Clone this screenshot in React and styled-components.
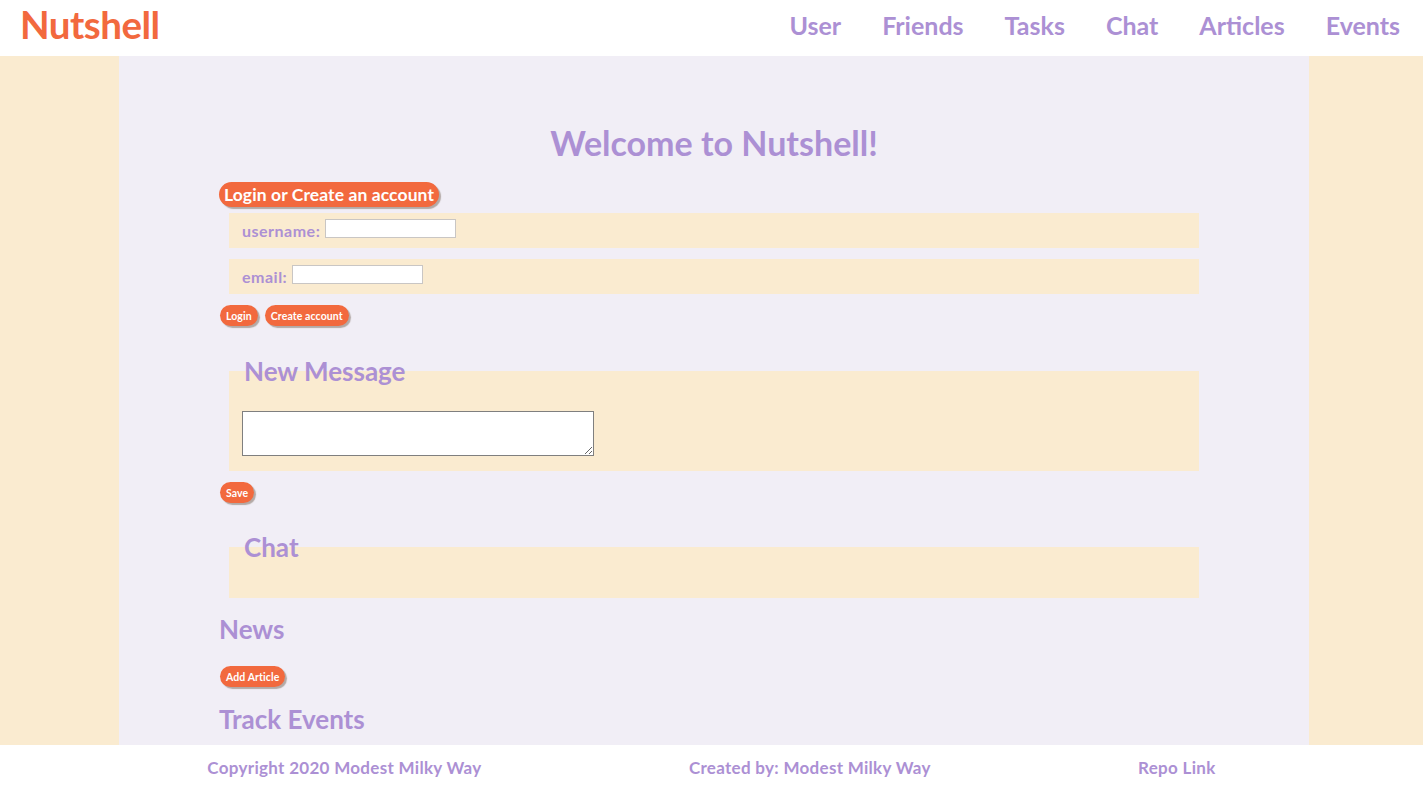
import React from 'react'
import styled, {createGlobalStyle} from 'styled-components'

const purple = '#ac90d4'
const orange = '#f2693e'
const cream = '#faebd0'
const lavender = '#f1eef6'

const GlobalStl = createGlobalStyle`
  html, body {
    margin: 0;
    padding: 0;
    background: ${cream};
    font-family: Lato, "Open Sans", sans-serif;
  }
`

const PageStl = styled.div`
  display: flex;
  flex-direction: column;
  min-height: 100vh;
`

const HeaderStl = styled.header`
  display: flex;
  align-items: center;
  justify-content: space-between;
  height: 56px;
  padding: 0 23px 6px 20px;
  background: #fff;
  box-sizing: border-box;
`

const LogoStl = styled.h1`
  margin: 0 0 2px;
  font-size: 38.5px;
  font-weight: 700;
  color: ${orange};
  letter-spacing: -0.5px;
`

const NavStl = styled.nav`
  display: flex;
  gap: 41px;
`

const NavLinkStl = styled.a`
  font-size: 25px;
  font-weight: 700;
  color: ${purple};
  text-decoration: none;
`

const MainStl = styled.main`
  flex: 1 1 auto;
  display: flex;
  padding-left: 119px;
`

const ColumnStl = styled.div`
  width: 1190px;
  background: ${lavender};
  padding: 66px 100px 11px 100px;
  box-sizing: border-box;
`

const ContentStl = styled.div`
  margin-right: 10px;
`

const TitleStl = styled.h2`
  margin: 0 0 18px;
  text-align: center;
  font-size: 34px;
  line-height: 42px;
  font-weight: 700;
  color: ${purple};
`

const ButtonStl = styled.button`
  display: block;
  border: none;
  border-radius: 14px;
  background: ${orange};
  color: #fff;
  font-family: inherit;
  font-weight: 700;
  font-size: ${({big}) => big ? '17.5px' : '10.5px'};
  letter-spacing: 0.1px;
  height: ${({big}) => big ? '25px' : '21px'};
  padding: ${({big}) => big ? '0 5px' : '0 6px'};
  box-shadow: 2px 2px 1px #b3a9a6;
  cursor: pointer;
  margin: ${({m}) => m || '0'};
`

const ButtonRowStl = styled.div`
  display: flex;
  gap: 7px;
  margin: 11px 0 0 1px;
`

const FieldRowStl = styled.div`
  display: flex;
  align-items: center;
  height: 35px;
  margin: ${({first}) => first ? '6px 0 0 10px' : '11px 0 0 10px'};
  padding-left: 13px;
  background: ${cream};
`

const LabelStl = styled.label`
  font-size: 16px;
  font-weight: 700;
  letter-spacing: 0.5px;
  color: ${purple};
  margin-right: 5px;
`

const InputStl = styled.input`
  width: 131px;
  height: 19px;
  box-sizing: border-box;
  border: 1px solid #c9c6c4;
  background: #fff;
  margin-top: -4px;
`

const FieldsetStl = styled.fieldset`
  margin: ${({m}) => m};
  border: none;
  background: ${cream};
  padding: 0 13px;
  min-height: ${({h}) => h};
  box-sizing: border-box;
`

const LegendStl = styled.legend`
  padding: 0 2px;
  font-size: 26px;
  line-height: 30px;
  font-weight: 700;
  color: ${purple};
`

const TextareaStl = styled.textarea`
  display: block;
  width: 352px;
  height: 45px;
  box-sizing: border-box;
  border: 1px solid #7f7f7f;
  margin: 25px 0 14px;
  background: #fff;
`

const HeadingStl = styled.h3`
  margin: ${({m}) => m};
  font-size: 26px;
  line-height: 30px;
  font-weight: 700;
  color: ${purple};
`

const FooterStl = styled.footer`
  display: flex;
  align-items: center;
  justify-content: space-evenly;
  height: 45px;
  background: #fff;
`

const FooterTextStl = styled.span`
  font-size: 17px;
  font-weight: 700;
  letter-spacing: 0.3px;
  color: ${purple};
`

const navItems = ['User', 'Friends', 'Tasks', 'Chat', 'Articles', 'Events']

export default function App() {
  return (
    <>
      <GlobalStl />
      <PageStl>
        <HeaderStl>
          <LogoStl>Nutshell</LogoStl>
          <NavStl>
            {navItems.map(item => <NavLinkStl key={item} href="#">{item}</NavLinkStl>)}
          </NavStl>
        </HeaderStl>

        <MainStl>
          <ColumnStl>
            <TitleStl>Welcome to Nutshell!</TitleStl>

            <ContentStl>
              <ButtonStl big>Login or Create an account</ButtonStl>

              <FieldRowStl first>
                <LabelStl>username:</LabelStl>
                <InputStl />
              </FieldRowStl>
              <FieldRowStl>
                <LabelStl>email:</LabelStl>
                <InputStl />
              </FieldRowStl>

              <ButtonRowStl>
                <ButtonStl>Login</ButtonStl>
                <ButtonStl>Create account</ButtonStl>
              </ButtonRowStl>

              <FieldsetStl m="30px 0 0 10px" h="115px">
                <LegendStl>New Message</LegendStl>
                <TextareaStl />
              </FieldsetStl>
              <ButtonStl m="11px 0 0 1px">Save</ButtonStl>

              <FieldsetStl m="29px 0 0 10px" h="66px">
                <LegendStl>Chat</LegendStl>
              </FieldsetStl>

              <HeadingStl m="16px 0 0">News</HeadingStl>
              <ButtonStl m="22px 0 0 1px">Add Article</ButtonStl>
              <HeadingStl m="17px 0 0">Track Events</HeadingStl>
            </ContentStl>
          </ColumnStl>
        </MainStl>

        <FooterStl>
          <FooterTextStl>Copyright 2020 Modest Milky Way</FooterTextStl>
          <FooterTextStl>Created by: Modest Milky Way</FooterTextStl>
          <FooterTextStl>Repo Link</FooterTextStl>
        </FooterStl>
      </PageStl>
    </>
  )
}
